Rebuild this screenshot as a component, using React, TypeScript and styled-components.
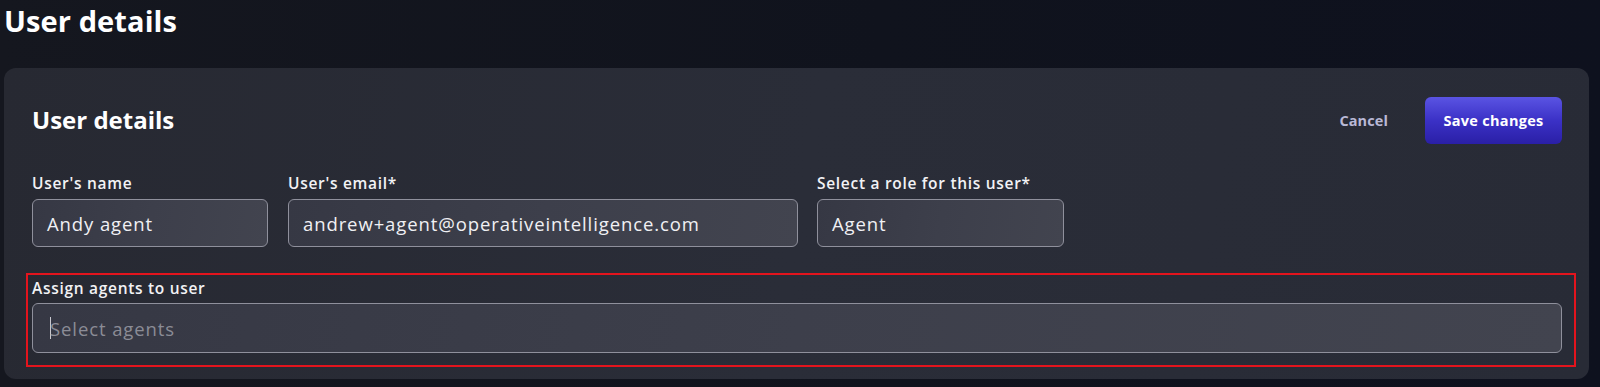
import React from "react";
import styled, { createGlobalStyle } from "styled-components";

const Global = createGlobalStyle`
  html, body { margin: 0; padding: 0; }
  body {
    background: #0f121d;
    font-family: "Open Sans", "DejaVu Sans", sans-serif;
    color: #ffffff;
    width: 1600px;
    height: 387px;
    overflow: hidden;
  }
`;

const Page = styled.div`
  height: 387px;
  box-sizing: border-box;
  padding: 0 11px 8px 4px;
  background: linear-gradient(90deg, #15171f 0%, #10131d 55%, #0e111e 100%);
  display: flex;
  flex-direction: column;
`;

const PageTitle = styled.h1`
  margin: 0;
  height: 68px;
  padding-top: 3px;
  box-sizing: border-box;
  font-size: 29px;
  font-weight: 700;
  line-height: 36px;
  letter-spacing: 0.1px;
`;

const Card = styled.section`
  flex: 1;
  border-radius: 12px;
  background: linear-gradient(100deg, #272932 0%, #2a2d38 50%, #282b36 100%);
  padding: 28px 13px 12px 22px;
  display: flex;
  flex-direction: column;
`;

const Header = styled.div`
  display: flex;
  align-items: center;
  justify-content: space-between;
  padding: 0 14px 0 6px;
  height: 48px;
`;

const CardTitle = styled.h2`
  margin: 0;
  font-size: 24px;
  font-weight: 700;
  line-height: 30px;
`;

const Actions = styled.div`
  display: flex;
  align-items: center;
  gap: 37px;
`;

const CancelButton = styled.button`
  background: none;
  border: none;
  padding: 0;
  font-family: inherit;
  font-size: 14.5px;
  font-weight: 700;
  letter-spacing: 0.1px;
  color: #b9b9d6;
  cursor: pointer;
`;

const SaveButton = styled.button`
  width: 137px;
  height: 47px;
  border-radius: 6px;
  border: none;
  background: linear-gradient(180deg, #5a54e3 0%, #3b31c6 50%, #2a1fa6 100%);
  color: #ffffff;
  font-family: inherit;
  font-size: 14.5px;
  font-weight: 700;
  letter-spacing: 0.3px;
  cursor: pointer;
`;

const Row = styled.div`
  display: flex;
  margin-top: 29px;
  padding-left: 6px;
`;

const Field = styled.div<{ $width: number; $gap?: number }>`
  display: flex;
  flex-direction: column;
  width: ${(p) => p.$width}px;
  margin-left: ${(p) => p.$gap ?? 0}px;
`;

const Label = styled.label`
  font-size: 15.5px;
  font-weight: 600;
  line-height: 20px;
  letter-spacing: 0.7px;
  color: #f2f2f5;
  margin-bottom: 6px;
`;

const Box = styled.div<{ $height: number; $pad?: number }>`
  height: ${(p) => p.$height}px;
  box-sizing: border-box;
  border: 1.5px solid #8f909c;
  border-radius: 6px;
  background: linear-gradient(100deg, #363844 0%, #3d3f4b 50%, #42444f 100%);
  display: flex;
  align-items: center;
  padding-left: ${(p) => p.$pad ?? 14}px;
  font-size: 18.5px;
  letter-spacing: 0.9px;
  color: #f0f0f4;
  white-space: nowrap;
`;

const Highlight = styled.div`
  margin-top: 26px;
  border: 2px solid #e3141d;
  padding: 3px 12px 12px 4px;
  display: flex;
  flex-direction: column;
`;

const AssignLabel = styled(Label)`
  margin-bottom: 5px;
`;

const Caret = styled.span`
  width: 1px;
  height: 22px;
  background: #c9c9d0;
  margin-right: -1px;
`;

const Placeholder = styled.span`
  color: #8b8c96;
`;

export default function App() {
  return (
    <>
      <Global />
      <Page>
        <PageTitle>User details</PageTitle>
        <Card>
          <Header>
            <CardTitle>User details</CardTitle>
            <Actions>
              <CancelButton>Cancel</CancelButton>
              <SaveButton>Save changes</SaveButton>
            </Actions>
          </Header>
          <Row>
            <Field $width={236}>
              <Label>User's name</Label>
              <Box $height={48}>Andy agent</Box>
            </Field>
            <Field $width={510} $gap={20}>
              <Label>User's email*</Label>
              <Box $height={48}>andrew+agent@operativeintelligence.com</Box>
            </Field>
            <Field $width={247} $gap={19}>
              <Label>Select a role for this user*</Label>
              <Box $height={48}>Agent</Box>
            </Field>
          </Row>
          <Highlight>
            <AssignLabel>Assign agents to user</AssignLabel>
            <Box $height={50} $pad={17}>
              <Caret />
              <Placeholder>Select agents</Placeholder>
            </Box>
          </Highlight>
        </Card>
      </Page>
    </>
  );
}
